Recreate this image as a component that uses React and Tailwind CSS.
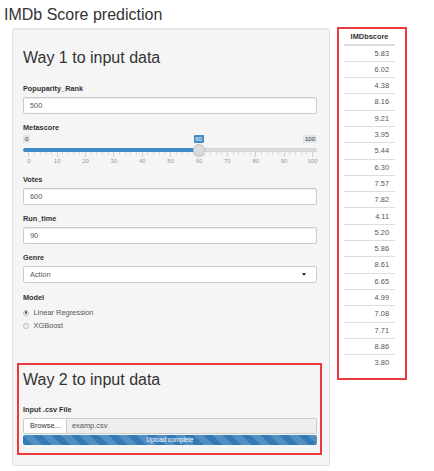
import React from "react";

const scores = ["5.83", "6.02", "4.38", "8.16", "9.21", "3.95", "5.44", "6.30", "7.57", "7.82", "4.11", "5.20", "5.86", "8.61", "6.65", "4.99", "7.08", "7.71", "8.86", "3.80"];

const Label = ({ children }) => (
  <div className="font-bold text-[7.3px] leading-[10px] mb-[3px] text-[#333]">{children}</div>
);

const TextField = ({ label, value }) => (
  <div className="mb-[9px]">
    <Label>{label}</Label>
    <div className="h-[17px] bg-white border border-[#ccc] rounded-[2px] shadow-[inset_0_1px_1px_rgba(0,0,0,0.075)] pl-[6px] flex items-center text-[7.4px] text-[#555]">
      {value}
    </div>
  </div>
);

// metascore slider, ticks every 10 with minor ticks between
const Slider = ({ value = 60 }) => {
  const start = 5.3;
  const step = 28.37;
  const handleX = start + (value / 10) * step;
  const majors = Array.from({ length: 11 }, (_, i) => i);
  const minors = [];
  for (let i = 0; i < 10; i++) {
    for (let j = 1; j < 5; j++) minors.push(start + i * step + (j * step) / 5);
  }

  return (
    <div className="relative h-[30px] mb-[9px]">
      <span className="absolute left-0 top-[-1px] h-[8px] px-[2px] rounded-[1px] bg-[#e1e4e9] text-[6px] leading-[8px] text-[#333]">0</span>
      <span className="absolute right-0 top-[-1px] h-[8px] px-[2px] rounded-[1px] bg-[#e1e4e9] text-[6px] leading-[8px] text-[#333]">100</span>
      <span
        className="absolute top-[-1.5px] h-[8.5px] w-[10px] -translate-x-1/2 rounded-[1px] bg-[#428bca] text-white text-[6px] leading-[8.5px] text-center"
        style={{ left: handleX }}
      >
        {value}
      </span>

      <div className="absolute left-0 right-0 top-[12px] h-[4px] rounded-full bg-[#dedede] border border-[#d4d4d4]" />
      <div className="absolute left-0 top-[12px] h-[4px] rounded-l-full bg-[#428bca]" style={{ width: handleX }} />
      <div
        className="absolute top-[8px] w-[12px] h-[12px] -translate-x-1/2 rounded-full bg-[#dcdcdc] border border-[#c8c8c8] shadow-[0_1px_2px_rgba(0,0,0,0.2)]"
        style={{ left: handleX }}
      />

      {majors.map((i) => (
        <div key={"M" + i}>
          <span className="absolute top-[16px] w-px h-[5px] bg-[#c9d3dc]" style={{ left: start + i * step }} />
          <span
            className="absolute top-[22px] -translate-x-1/2 text-[6px] leading-[7px] text-[#999]"
            style={{ left: start + i * step + 0.5 }}
          >
            {i * 10}
          </span>
        </div>
      ))}
      {minors.map((x, k) => (
        <span key={"m" + k} className="absolute top-[16px] w-px h-[3px] bg-[#d6dde3]" style={{ left: x }} />
      ))}
    </div>
  );
};

const Radio = ({ checked, children }) => (
  <div className="flex items-center h-[13px] text-[7.4px] text-[#555]">
    <span className="w-[6px] h-[6px] mr-[4.5px] rounded-full border border-[#bbb] bg-[#f0f0f0] flex items-center justify-center">
      {checked && <span className="w-[2.5px] h-[2.5px] rounded-full bg-[#555]" />}
    </span>
    {children}
  </div>
);

const App = () => {
  return (
    <div className="w-[434px] h-[471px] bg-white overflow-hidden text-[#333] font-['Liberation_Sans',Arial,sans-serif]">
      <h2 className="h-[27px] pl-[4px] pt-[3.5px] text-[16px] leading-[22px] text-[#333]">IMDb Score prediction</h2>

      <div className="flex items-start pl-[12px] gap-[7px]">
        {/* inputs panel */}
        <div className="mt-[1px] w-[318px] bg-[#f5f5f5] border border-[#e3e3e3] rounded-[3px] shadow-[inset_0_1px_1px_rgba(0,0,0,0.05)] pt-[19px] pl-[10px] pr-[12px] pb-[10px]">
          <h3 className="text-[16px] leading-[20px] mb-[16px]">Way 1 to input data</h3>

          <TextField label="Popuparity_Rank" value="500" />

          <Label>Metascore</Label>
          <Slider value={60} />

          <TextField label="Votes" value="600" />
          <TextField label="Run_time" value="90" />

          <div className="mb-[10px]">
            <Label>Genre</Label>
            <div className="h-[17px] bg-white border border-[#ccc] rounded-[2px] pl-[6px] pr-[10px] flex items-center justify-between text-[7.4px] text-[#555]">
              <span>Action</span>
              <span className="w-0 h-0 border-l-[2.5px] border-r-[2.5px] border-t-[3px] border-l-transparent border-r-transparent border-t-[#333]" />
            </div>
          </div>

          <Label>Model</Label>
          <div>
            <Radio checked>Linear Regression</Radio>
            <Radio>XGBoost</Radio>
          </div>

          {/* way 2, marked in red */}
          <div className="mt-[31px] -ml-[6px] -mr-[5px] border-2 border-[#ea3a3d] pt-[5px] pl-[4px] pr-[3px] pb-[8px]">
            <h3 className="text-[16px] leading-[20px] mb-[15px]">Way 2 to input data</h3>
            <Label>Input .csv File</Label>
            <div className="flex h-[16px] text-[7.4px]">
              <div className="w-[44px] bg-white border border-[#ccc] rounded-l-[2px] flex items-center pl-[6px] text-[#333]">Browse...</div>
              <div className="flex-1 bg-[#eee] border border-l-0 border-[#ccc] rounded-r-[2px] flex items-center pl-[5px] text-[#555]">examp.csv</div>
            </div>
            <div className="mt-[1px] h-[10px] rounded-[2px] bg-[#337ab7] bg-[linear-gradient(45deg,rgba(255,255,255,.15)_25%,transparent_25%,transparent_50%,rgba(255,255,255,.15)_50%,rgba(255,255,255,.15)_75%,transparent_75%,transparent)] bg-[length:19px_19px] text-white text-[6.3px] leading-[10px] text-center">
              Upload complete
            </div>
          </div>
        </div>

        {/* score table, marked in red */}
        <div className="w-[70px] border-2 border-[#ea3a3d] pl-[5px] pr-[10px] pb-[7px]">
          <table className="w-full text-[7.4px]">
            <thead>
              <tr className="h-[16px] border-b-2 border-[#ddd]">
                <th className="font-bold text-center text-[#333] pt-[1px]">IMDbscore</th>
              </tr>
            </thead>
            <tbody>
              {scores.map((s, i) => (
                <tr key={i} className={`h-[16.3px] ${i > 0 ? "border-t border-[#ddd]" : ""}`}>
                  <td className="text-right pr-[6px] text-[#555]">{s}</td>
                </tr>
              ))}
            </tbody>
          </table>
        </div>
      </div>
    </div>
  );
};

export default App;
